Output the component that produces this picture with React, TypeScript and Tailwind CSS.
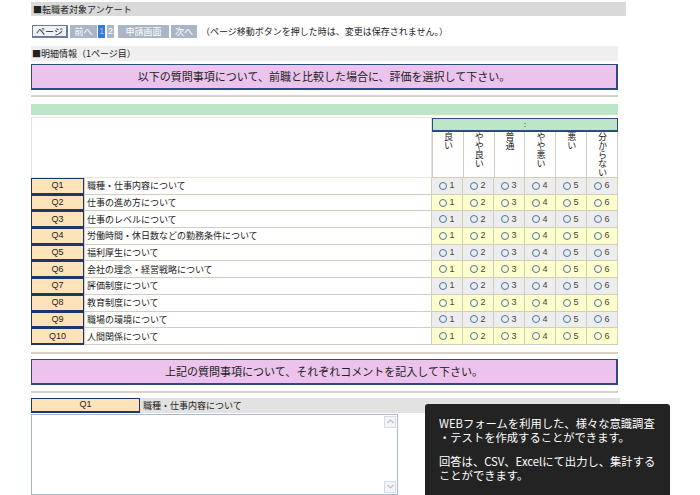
import React from 'react';

const questions = [
  '職種・仕事内容について',
  '仕事の進め方について',
  '仕事のレベルについて',
  '労働時間・休日数などの勤務条件について',
  '福利厚生について',
  '会社の理念・経営戦略について',
  '評価制度について',
  '教育制度について',
  '職場の環境について',
  '人間関係について',
];

const scale = ['良い', 'やや良い', '普通', 'やや悪い', '悪い', '分からない'];

const Radio: React.FC<{ n: number }> = ({ n }) => (
  <span className="flex items-center gap-[2px]">
    <span className="w-[8px] h-[8px] rounded-full border border-[#4d72a6]" />
    <span className="text-[9px] leading-none text-[#444] font-['Liberation_Sans',sans-serif]">{n}</span>
  </span>
);

const App: React.FC = () => {
  return (
    <div className="relative h-[495px] w-[700px] overflow-hidden bg-white text-[#222] font-['Noto_Sans_CJK_JP',sans-serif]">
      <div className="pt-[2px] pl-[31px]">
        {/* Page title */}
        <div className="w-[595px] h-[14px] bg-[#d9d9d9] flex items-center pl-[2px] text-[9px] leading-none">
          ■転職者対象アンケート
        </div>

        {/* Page nav */}
        <div className="mt-[9px] flex items-center h-[13px] text-[9px] leading-none">
          <div className="ml-[1px] w-[36px] h-full flex items-center justify-center bg-[#eef2f9] border border-[#6d7d99] border-r-2 border-b-2">
            ページ
          </div>
          <div className="ml-[2px] w-[27px] h-full flex items-center justify-center bg-[#aab6c7] text-white">前へ</div>
          <div className="ml-[1px] w-[7px] h-full flex items-center justify-center bg-[#2a7de1] text-[#ff9c9c] font-['Liberation_Sans',sans-serif]">1</div>
          <div className="ml-[2px] w-[7px] h-full flex items-center justify-center bg-[#aab6c7] text-white font-['Liberation_Sans',sans-serif]">2</div>
          <div className="ml-[4px] w-[51px] h-full flex items-center justify-center bg-[#aab6c7] text-white">申請画面</div>
          <div className="ml-[2px] w-[26px] h-full flex items-center justify-center bg-[#aab6c7] text-white">次へ</div>
          <span className="ml-[4px]">（ページ移動ボタンを押した時は、変更は保存されません。）</span>
        </div>

        {/* Section title */}
        <div className="mt-[8px] w-[587px] h-[15px] bg-[#efefef] flex items-center pl-[1px] text-[9px] leading-none">
          ■明細情報（1ページ目）
        </div>

        <div className="mt-[3px] w-[587px] h-[26px] bg-[#ebc3ec] border border-[#2d4b7d] border-r-2 border-b-2 flex items-center justify-center text-[11px] leading-none">
          以下の質問事項について、前職と比較した場合に、評価を選択して下さい。
        </div>

        <div className="mt-[5px] w-[587px] h-[2px] bg-[#d8d2c4]" />
        <div className="mt-[7px] w-[587px] h-[11px] bg-[#bde6c8]" />

        {/* Rating table */}
        <div className="mt-[2px] w-[587px]">
          <div className="flex h-[61px]">
            <div className="w-[401px] border border-[#e9e3d8] bg-white" />
            <div className="w-[186px] flex flex-col">
              <div className="h-[15px] mt-[1px] bg-[#bde6c8] border border-[#2d4b7d] border-b-2 flex items-center justify-center text-[7px] leading-none">
                :
              </div>
              <div className="flex-1 flex border-l border-[#d3cdbf]">
                {scale.map((label) => (
                  <div
                    key={label}
                    className="w-[31px] border-r border-b border-[#d3cdbf] bg-white flex justify-center"
                  >
                    <span className="[writing-mode:vertical-rl] text-[9px] leading-[10px]">{label}</span>
                  </div>
                ))}
              </div>
            </div>
          </div>

          {questions.map((q, i) => (
            <div key={q} className="flex h-[16.7px]">
              <div className="w-[53px] bg-[#ffe3b8] border border-[#1c3768] border-b-2 flex items-center justify-center text-[9px] leading-none font-['Liberation_Sans',sans-serif]">
                Q{i + 1}
              </div>
              <div className="w-[348px] bg-white border-l border-b border-[#d3cdbf] flex items-center pl-[2px] text-[9px] leading-none">
                {q}
              </div>
              <div className="flex border-l border-[#d3cdbf]">
                {scale.map((label, j) => (
                  <div
                    key={label}
                    className={`w-[31px] border-r border-b border-[#d3cdbf] flex items-center justify-center ${
                      i % 2 === 0 ? 'bg-[#ededed]' : 'bg-[#ffffcc]'
                    }`}
                  >
                    <Radio n={j + 1} />
                  </div>
                ))}
              </div>
            </div>
          ))}
        </div>

        <div className="mt-[7px] w-[587px] h-[2px] bg-[#d8d2c4]" />

        <div className="mt-[5px] w-[587px] h-[26px] bg-[#ebc3ec] border border-[#2d4b7d] border-r-2 border-b-2 flex items-center justify-center text-[11px] leading-none">
          上記の質問事項について、それぞれコメントを記入して下さい。
        </div>

        <div className="mt-[6px] w-[587px] h-[2px] bg-[#d8d2c4]" />

        {/* Comment Q1 */}
        <div className="mt-[5px] w-[589px] h-[15px] flex bg-[#e2e2e2]">
          <div className="w-[109px] bg-[#ffe3b8] border border-[#1c3768] border-b-2 flex items-center justify-center text-[9px] leading-none font-['Liberation_Sans',sans-serif]">
            Q1
          </div>
          <div className="flex items-center pl-[3px] text-[9px] leading-none">職種・仕事内容について</div>
        </div>

        <div className="mt-[1px] w-[367px] h-[81px] border border-[#a9b9cf] bg-white flex justify-end">
          <div className="w-[13px] flex flex-col justify-between py-[1px] pr-[1px]">
            <div className="h-[12px] border border-[#d6dce6] bg-[#f3f5f8] flex items-center justify-center">
              <svg width="7" height="5" viewBox="0 0 7 5">
                <path d="M0.5 4 L3.5 1 L6.5 4" fill="none" stroke="#b8c2d2" strokeWidth="1.2" />
              </svg>
            </div>
            <div className="h-[12px] border border-[#d6dce6] bg-[#f3f5f8] flex items-center justify-center">
              <svg width="7" height="5" viewBox="0 0 7 5">
                <path d="M0.5 1 L3.5 4 L6.5 1" fill="none" stroke="#b8c2d2" strokeWidth="1.2" />
              </svg>
            </div>
          </div>
        </div>
      </div>

      {/* Info overlay */}
      <div className="absolute left-[425px] top-[404px] w-[245px] h-[100px] rounded-t-[3px] bg-[#232323] text-white px-[14px] pt-[12px] text-[11.3px] leading-[14px] whitespace-nowrap">
        <p>WEBフォームを利用した、様々な意識調査</p>
        <p>・テストを作成することができます。</p>
        <p className="mt-[10px]">回答は、CSV、Excelにて出力し、集計する</p>
        <p>ことができます。</p>
      </div>
    </div>
  );
};

export default App;
